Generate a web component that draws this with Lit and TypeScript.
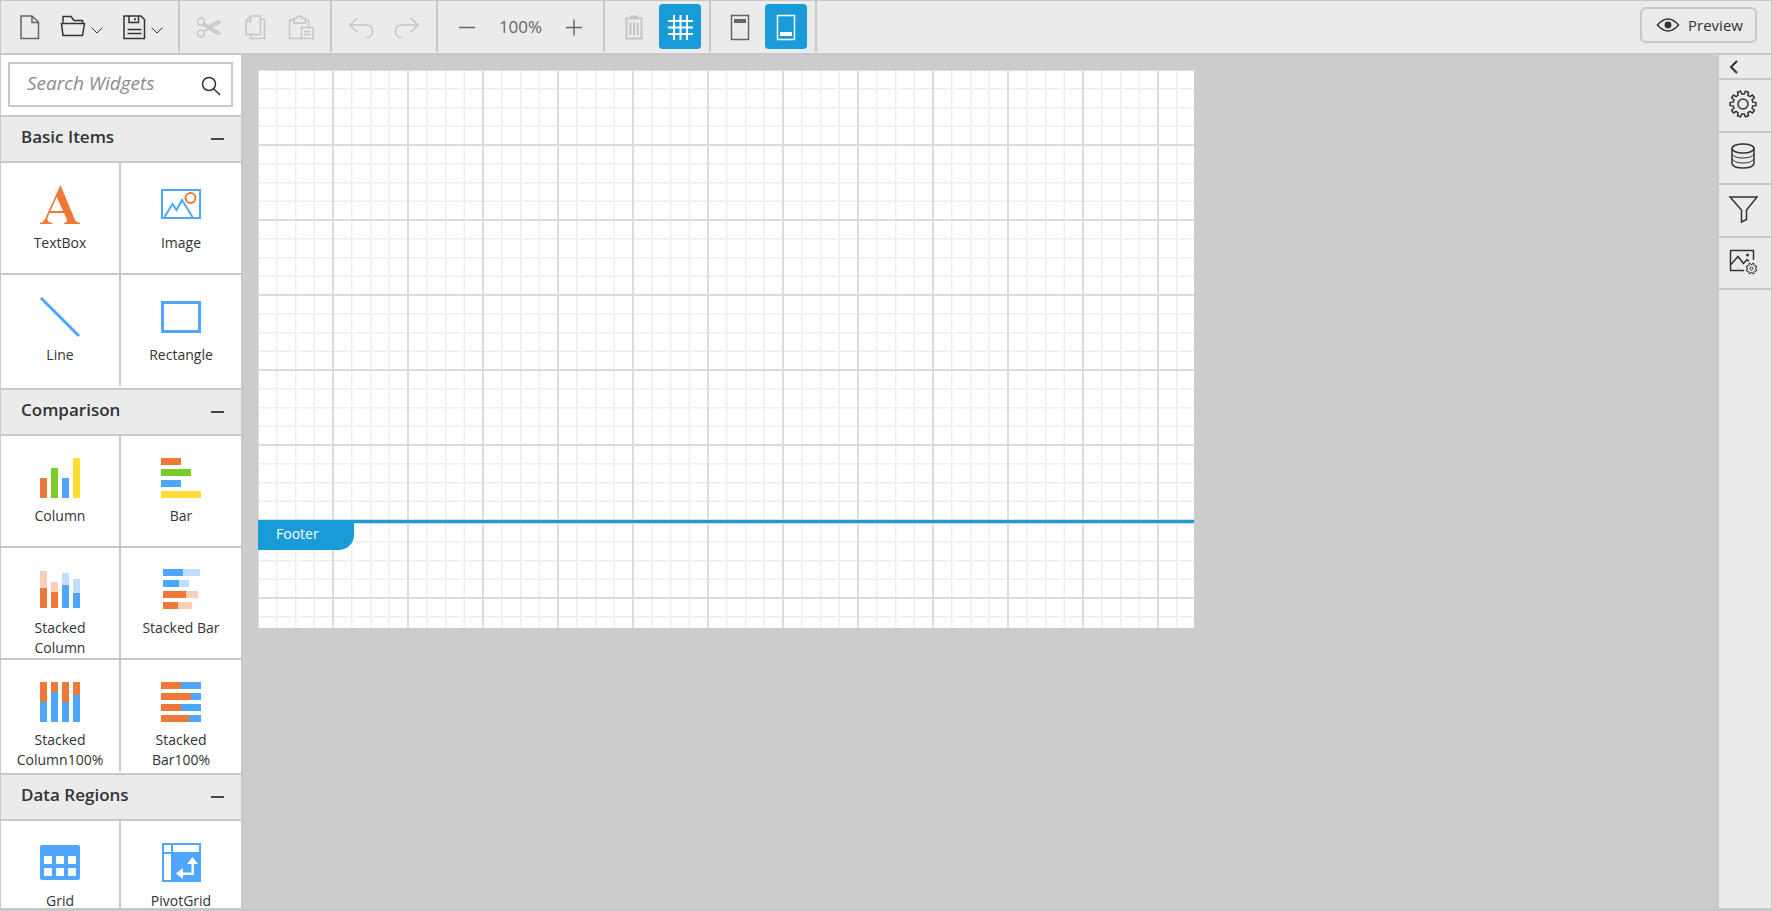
import { LitElement, html, css, svg, nothing } from "lit";
import { customElement, property, state } from "lit/decorators.js";
import { classMap } from "lit/directives/class-map.js";

const ORANGE = "#ed7838";
const BLUE = "#4ea6ff";
const GREEN = "#7acc29";
const YELLOW = "#ffdd33";
const PALE_ORANGE = "#f9cfb8";
const PALE_BLUE = "#c0dfff";

type Bar = [x: number, y: number, w: number, h: number, fill: string];
const bars = (list: Bar[]) =>
  list.map(([x, y, w, h, f]) => svg`<rect x=${x} y=${y} width=${w} height=${h} fill=${f}></rect>`);

const gearPath = (cx: number, cy: number, outer: number, inner: number, teeth: number) => {
  const pts: string[] = [];
  const step = (Math.PI * 2) / teeth;
  for (let i = 0; i < teeth; i++) {
    const a = i * step - Math.PI / 2 + step / 2;
    const at = (r: number, k: number) =>
      `${(cx + r * Math.cos(a + k * step)).toFixed(2)} ${(cy + r * Math.sin(a + k * step)).toFixed(2)}`;
    pts.push(at(inner, -0.3), at(outer, -0.2), at(outer, 0.2), at(inner, 0.3));
  }
  return `M${pts.join("L")}Z`;
};

/* Toolbar and panel glyphs, drawn in a 26 x 26 box. */
const glyphs: Record<string, unknown> = {
  new: svg`<path d="M4 2H15L21.500 8V24.500H4Z M15 2V8.500H21.500" stroke="#666"></path>`,
  open: svg`<path d="M3 8.500V2.500H11L14 6.500H22.500V9.500 M1.500 9.500H24.500L22.500 21.500H3Z"></path>`,
  save: svg`<path d="M4 2H21L24.500 5.500V24.500H4Z M9 2V8.500H18.500V2 M15 4V6.500 M7.500 15.500H21.500 M7.500 19.500H21.500"></path>`,
  cut: svg`<circle cx="5" cy="7.500" r="3.500"></circle><circle cx="5" cy="19.500" r="3.500"></circle><path d="M8 9.500L24 18.500L22 20L7.500 11.500 M8 17.500L24 8.500L22 7L11 13.500"></path>`,
  copy: svg`<path d="M8.500 2H18.500V20.500H4V7Z M8.500 2V7.500H4 M18.500 5.500H22.500V24.500H8.500V20.500"></path>`,
  paste: svg`<path d="M6 6H1.500V24.500H13 M17 6H20.500V12.500 M6 4.500H8.500Q9 2 11.500 2Q14 2 14.500 4.500H17.500V9H6Z M13.500 13.500H25V24.500H13.500Z M16 17.500H22.500 M16 20.500H22.500"></path>`,
  undo: svg`<path d="M9.500 4L2 11L9.500 18 M2 11H19Q24.500 11.500 24.500 17Q24.500 23.500 18 23.500"></path>`,
  redo: svg`<path d="M16.500 4L24 11L16.500 18 M24 11H7Q1.500 11.500 1.500 17Q1.500 23.500 8 23.500"></path>`,
  minus: svg`<path d="M5 13.500H21"></path>`,
  plus: svg`<path d="M5 13.500H21 M13 5.500V21.500"></path>`,
  trash: svg`<path d="M4 4.500H22 M10 4V2.500H16V4 M5.500 6V24.500H20.500V6 M9.500 8.500V21 M13 8.500V21 M16.500 8.500V21" stroke-width="2"></path>`,
  grid: svg`<path d="M7 1V26 M13.500 1V26 M20 1V26 M1 7H26 M1 13.500H26 M1 20H26" stroke-width="2"></path>`,
  header: svg`<path d="M4.500 1.500H21.500V25.500H4.500Z"></path><rect x="7" y="5" width="12" height="4" fill="currentColor" stroke="none"></rect>`,
  footer: svg`<path d="M4.500 1.500H21.500V25.500H4.500Z"></path><rect x="7" y="18" width="12" height="4" fill="currentColor" stroke="none"></rect>`,
  eye: svg`<path d="M1.500 13Q13 0 24.500 13Q13 26 1.500 13Z"></path><circle cx="13" cy="13" r="3" fill="currentColor"></circle>`,
  search: svg`<circle cx="11" cy="11" r="6.500"></circle><path d="M15.500 15.500L22 22"></path>`,
  gear: svg`<path d=${gearPath(13, 13, 13, 10, 10)}></path><circle cx="13" cy="13" r="5"></circle>`,
  data: svg`<ellipse cx="13" cy="5.500" rx="11" ry="4.500"></ellipse><path d="M2 5.500V20.500Q3 25 13 25T24 20.500V5.500"></path><path d="M2 11Q4 15 13 15T24 11 M2 15.500Q4 20 13 20T24 15.500" stroke-width="1"></path>`,
  filter: svg`<path d="M0 1H27L16.500 14V23.500L11.500 26V14Z"></path>`,
  image: svg`<path d="M14 22.500H0.500V2.500H23.500V12 M0.500 17L8 8.500L13.500 15.500L17 11.500L19 13.500"></path><circle cx="17.500" cy="7" r="1.500" fill="currentColor" stroke="none"></circle><path d=${gearPath(21.5, 20.5, 5.5, 4, 8)} stroke-width="1"></path><circle cx="21.500" cy="20.500" r="1.500" stroke-width="1"></circle>`,
};

/* Widget pictures, drawn in a 40 x 40 box. */
const pictures: Record<string, unknown> = {
  textbox: svg`<path fill=${ORANGE} fill-rule="evenodd" d="M20.500 0L34.500 34Q36 37.500 40 38V39H24V38Q28 37.500 26.500 34L24 28H9.500L7.500 33Q6.500 37.500 12.500 38V39H0V38Q3.500 37.500 5 34Z M16.700 12L10.500 26H23Z"></path>`,
  image: svg`<g fill="none" stroke-width="2"><path stroke=${BLUE} d="M1 5H39V33H1Z M3.500 32L11.500 19L15.500 25L21 15L31.500 32"></path><circle cx="29.500" cy="13" r="5" stroke=${ORANGE}></circle></g>`,
  line: svg`<path stroke=${BLUE} stroke-width="3" d="M1 1L39 39"></path>`,
  rectangle: svg`<path fill="none" stroke=${BLUE} stroke-width="3" d="M1.500 5.500H38.500V34.500H1.500Z"></path>`,
  column: bars([[0, 20, 7, 20, ORANGE], [11, 10, 7, 30, GREEN], [22, 20, 7, 20, BLUE], [33, 0, 7, 40, YELLOW]]),
  bar: bars([[0, 0, 20, 7, ORANGE], [0, 11, 30, 7, GREEN], [0, 22, 20, 7, BLUE], [0, 33, 40, 7, YELLOW]]),
  stackedColumn: bars([
    [0, 1, 7, 17, PALE_ORANGE], [0, 18, 7, 20, ORANGE], [11, 12, 7, 10, PALE_ORANGE], [11, 22, 7, 16, ORANGE],
    [22, 3, 7, 12, PALE_BLUE], [22, 15, 7, 23, BLUE], [33, 9, 7, 14, PALE_BLUE], [33, 23, 7, 15, BLUE],
  ]),
  stackedBar: bars([
    [2, -1, 20, 7, BLUE], [22, -1, 17, 7, PALE_BLUE], [2, 10, 16, 7, BLUE], [18, 10, 10, 7, PALE_BLUE],
    [2, 21, 23, 7, ORANGE], [25, 21, 12, 7, PALE_ORANGE], [2, 32, 15, 7, ORANGE], [17, 32, 14, 7, PALE_ORANGE],
  ]),
  stackedColumn100: bars([
    [0, 0, 7, 20, ORANGE], [0, 20, 7, 20, BLUE], [11, 0, 7, 10, ORANGE], [11, 10, 7, 30, BLUE],
    [22, 0, 7, 20, ORANGE], [22, 20, 7, 20, BLUE], [33, 0, 7, 13, ORANGE], [33, 13, 7, 27, BLUE],
  ]),
  stackedBar100: bars([
    [0, 0, 20, 7, ORANGE], [20, 0, 20, 7, BLUE], [0, 11, 30, 7, ORANGE], [30, 11, 10, 7, BLUE],
    [0, 22, 20, 7, ORANGE], [20, 22, 20, 7, BLUE], [0, 33, 28, 7, ORANGE], [28, 33, 12, 7, BLUE],
  ]),
  grid: svg`<rect y="2" width="40" height="35" rx="2" fill=${BLUE}></rect>${bars(
    [13, 25].flatMap((y) => [4, 16, 28].map((x): Bar => [x, y, 8, 8, "#fff"])),
  )}`,
  pivot: svg`<rect x="1" width="39" height="39" fill=${BLUE}></rect>${bars([
    [3, 2, 7, 7, "#fff"], [12, 2, 26, 7, "#fff"], [3, 11, 7, 26, "#fff"],
  ])}<path fill="#fff" d="M31.500 14L37 21H33V32H22V36L15 30.500L22 25V29.500H30.500V21H26Z"></path>`,
};

@customElement("ui-glyph")
class UiGlyph extends LitElement {
  @property() name = "";
  static styles = css`
    :host { display: block; flex: none; width: 26px; height: 26px; }
    svg { display: block; width: 100%; height: 100%; overflow: visible; fill: none; stroke: currentColor; stroke-width: 1.5; }
  `;
  render() {
    return html`<svg viewBox="0 0 26 26" aria-hidden="true">${glyphs[this.name]}</svg>`;
  }
}

@customElement("tool-bar")
class ToolBar extends LitElement {
  static styles = css`
    :host { display: flex; align-items: stretch; height: 52px; background: #ebebeb; border-bottom: 2px solid #c8c8c8; color: #333; }
    .group { display: flex; align-items: center; gap: 4px; padding: 0 8px; margin-bottom: 1px; border-right: 2px solid #c8c8c8; }
    .files { padding-right: 7px; }
    button { display: flex; align-items: center; justify-content: center; padding: 0; border: 0; background: none; color: inherit; font: inherit; }
    .tool { width: 42px; height: 45px; border-radius: 4px; }
    .menu { justify-content: flex-start; gap: 5px; width: 56px; padding-left: 5px; }
    .chevron { width: 12px; height: 26px; fill: none; stroke: currentColor; }
    .tool:disabled { color: #c5c5c5; }
    .muted { color: #666; }
    .active { background: #199bd7; color: #fff; }
    .zoom { width: 57px; text-align: center; color: #666; font-size: 17px; line-height: 24px; }
    .preview { gap: 8px; width: 117px; height: 36px; margin: 6px 14px 0 auto; padding-left: 2px; border: 2px solid #c8c8c8; border-radius: 6px; font-size: 15px; line-height: 20px; }
    .preview ui-glyph { width: 24px; height: 24px; }
  `;

  private tool(name: string, label: string, kind = "", disabled = false) {
    return html`<button
      class=${classMap({ tool: true, menu: kind === "menu", active: kind === "active", muted: kind === "muted" })}
      aria-label=${label} ?disabled=${disabled}>
      <ui-glyph name=${name}></ui-glyph>
      ${kind === "menu" ? html`<svg class="chevron" viewBox="0 0 12 26" aria-hidden="true"><path d="M0.500 13.500L6 19L11.500 13.500"></path></svg>` : nothing}
    </button>`;
  }

  render() {
    return html`
      <div class="group files">${this.tool("new", "New")}${this.tool("open", "Open", "menu")}${this.tool("save", "Save", "menu")}</div>
      <div class="group">${this.tool("cut", "Cut", "", true)}${this.tool("copy", "Copy", "", true)}${this.tool("paste", "Paste", "", true)}</div>
      <div class="group">${this.tool("undo", "Undo", "", true)}${this.tool("redo", "Redo", "", true)}</div>
      <div class="group">${this.tool("minus", "Zoom out", "muted")}<span class="zoom">100%</span>${this.tool("plus", "Zoom in", "muted")}</div>
      <div class="group">${this.tool("trash", "Delete", "", true)}${this.tool("grid", "Grid lines", "active")}</div>
      <div class="group">${this.tool("header", "Header", "muted")}${this.tool("footer", "Footer", "active")}</div>
      <button class="preview"><ui-glyph name="eye"></ui-glyph>Preview</button>
    `;
  }
}

interface WidgetGroup {
  title: string;
  items: [picture: string, label: string][];
}

const widgetGroups: WidgetGroup[] = [
  { title: "Basic Items", items: [["textbox", "TextBox"], ["image", "Image"], ["line", "Line"], ["rectangle", "Rectangle"]] },
  {
    title: "Comparison",
    items: [
      ["column", "Column"], ["bar", "Bar"], ["stackedColumn", "Stacked Column"], ["stackedBar", "Stacked Bar"],
      ["stackedColumn100", "Stacked Column100%"], ["stackedBar100", "Stacked Bar100%"],
    ],
  },
  { title: "Data Regions", items: [["grid", "Grid"], ["pivot", "PivotGrid"]] },
];

@customElement("widget-panel")
class WidgetPanel extends LitElement {
  @state() private closed = new Set<string>();
  static styles = css`
    :host { display: block; width: 240px; background: #fff; border-right: 2px solid #c8c8c8; overflow: hidden; color: #333; }
    .search { display: flex; align-items: center; height: 41px; margin: 7px 8px 8px 7px; border: 2px solid #c8c8c8; padding-right: 7px; }
    input { flex: 1; min-width: 0; height: 37px; padding: 0 0 4px 17px; border: 0; outline: 0; background: none; color: #333; font: italic 19px/24px "Open Sans", sans-serif; }
    input::placeholder { color: #8c8c8c; opacity: 1; }
    button { padding: 0; border: 0; background: none; color: inherit; font: inherit; }
    .search button { padding-top: 2px; }
    h2 { margin: 0; font: inherit; }
    .head { display: flex; align-items: center; justify-content: space-between; width: 100%; height: 48px; padding: 0 17px 4px 20px; background: #ebebeb; border: solid #c8c8c8; border-width: 2px 0; font-size: 17px; font-weight: 600; line-height: 24px; }
    .sign { width: 13px; height: 2px; margin-top: 4px; background: #444; }
    .tiles { display: grid; grid-template-columns: 120px 1fr; padding-bottom: 2px; }
    .tile { display: flex; flex-direction: column; align-items: center; gap: 8px; height: 112px; padding: 22px 8px 0; border-bottom: 2px solid #c8c8c8; font-size: 14px; line-height: 20px; text-align: center; }
    .tile:nth-child(odd) { border-right: 2px solid #c8c8c8; }
    .tile:nth-last-child(-n + 2) { border-bottom: 0; height: 111px; }
    .picture { flex: none; width: 40px; height: 40px; overflow: visible; }
  `;

  private toggle(title: string) {
    const next = new Set(this.closed);
    if (!next.delete(title)) next.add(title);
    this.closed = next;
  }

  render() {
    return html`
      <div class="search">
        <input type="text" placeholder="Search Widgets" aria-label="Search Widgets" />
        <button aria-label="Search"><ui-glyph name="search"></ui-glyph></button>
      </div>
      ${widgetGroups.map(({ title, items }) => {
        const open = !this.closed.has(title);
        return html`<section>
          <h2><button class="head" aria-expanded=${open} @click=${() => this.toggle(title)}>${title}<span class="sign"></span></button></h2>
          ${open
            ? html`<div class="tiles">
                ${items.map(([picture, label]) => html`<button class="tile">
                  <svg class="picture" viewBox="0 0 40 40" aria-hidden="true">${pictures[picture]}</svg>
                  <span>${label}</span>
                </button>`)}
              </div>`
            : nothing}
        </section>`;
      })}
    `;
  }
}

@customElement("design-canvas")
class DesignCanvas extends LitElement {
  static styles = css`
    :host { display: block; padding: 15px; background: #ccc; overflow: hidden; }
    .sheet { width: 936px; }
    .area {
      --major: #dcdcdc 0 1px, transparent 1px 74px, #dcdcdc 74px 75px;
      --minor: transparent 0 18px, #eee 18px 19px, #f6f6f6 19px 20px, transparent 20px 37px, #eee 37px 38px, #f6f6f6 38px 39px, transparent 39px 55px, #f6f6f6 55px 56px, #eee 56px 57px, transparent 57px 75px;
      background: linear-gradient(90deg, var(--major)), linear-gradient(var(--major)), linear-gradient(90deg, var(--minor)), linear-gradient(var(--minor)), #fff;
      background-size: 75px 75px;
    }
    .body { height: 450px; }
    .footer { position: relative; border-top: 3px solid #199bd7; }
    .footer .area { height: 105px; }
    .tab { position: absolute; top: 0; left: 0; padding: 0 35px 5px 18px; border-radius: 0 0 15px 0; background: #199bd7; color: #fff; font-size: 14px; line-height: 22px; }
  `;
  render() {
    return html`<div class="sheet">
      <div class="area body"></div>
      <div class="footer"><div class="area"></div><span class="tab">Footer</span></div>
    </div>`;
  }
}

@customElement("side-rail")
class SideRail extends LitElement {
  static styles = css`
    :host { display: block; width: 52px; background: #ebebeb; border-left: 2px solid #c8c8c8; color: #333; }
    button { display: flex; align-items: center; width: 100%; padding: 0 0 3px 11px; border: 0; border-bottom: 2px solid #c8c8c8; background: none; color: inherit; }
    .collapse { height: 25px; padding: 0 0 0 10px; }
    .arrow { width: 9px; height: 14px; fill: none; stroke: currentColor; stroke-width: 2; }
    .items { display: grid; grid-template-rows: repeat(4, 1fr); height: 210px; }
  `;
  render() {
    const items = [["gear", "Properties"], ["data", "Data"], ["filter", "Parameters"], ["image", "Image manager"]];
    return html`
      <button class="collapse" aria-label="Expand panel"><svg class="arrow" viewBox="0 0 9 14" aria-hidden="true"><path d="M8 1L2 7L8 13"></path></svg></button>
      <div class="items">${items.map(([name, label]) => html`<button aria-label=${label}><ui-glyph name=${name}></ui-glyph></button>`)}</div>
    `;
  }
}

@customElement("app-root")
class AppRoot extends LitElement {
  static styles = css`
    :host { display: flex; flex-direction: column; box-sizing: border-box; height: 100vh; border: 1px solid #c8c8c8; border-bottom-width: 3px; font-family: "Open Sans", sans-serif; }
    tool-bar { flex: none; }
    .main { display: flex; flex: 1; min-height: 0; }
    widget-panel, side-rail { flex: none; }
    design-canvas { flex: 1; min-width: 0; }
  `;
  render() {
    return html`<tool-bar></tool-bar>
      <div class="main"><widget-panel></widget-panel><design-canvas></design-canvas><side-rail></side-rail></div>`;
  }
}
